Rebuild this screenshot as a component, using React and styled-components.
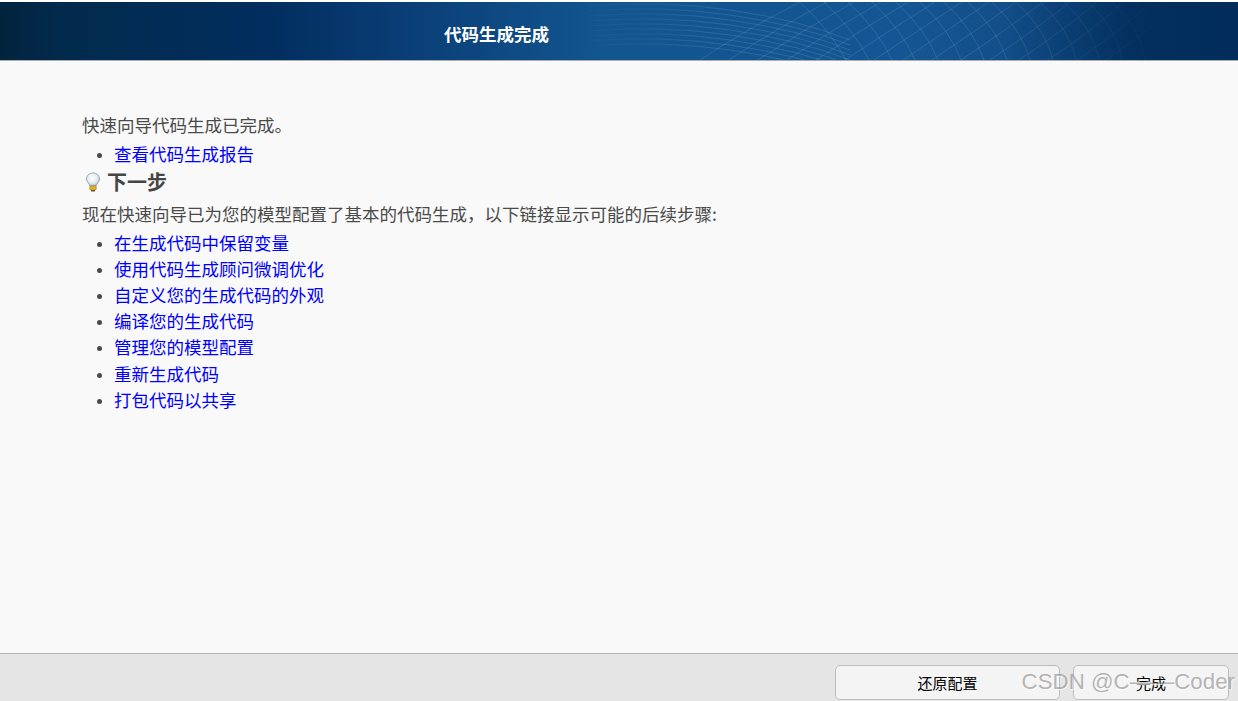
import React from 'react';
import styled, { createGlobalStyle } from 'styled-components';

const links = [
    '在生成代码中保留变量',
    '使用代码生成顾问微调优化',
    '自定义您的生成代码的外观',
    '编译您的生成代码',
    '管理您的模型配置',
    '重新生成代码',
    '打包代码以共享',
];

// mesh lines of the banner picture
const meshA = Array.from({ length: 17 }, (_, i) => {
    const x = 700 + i * 29;
    return `M${x} 60 Q${x + 45} 30 ${x + 100 - i * 2} 2`;
});
const meshB = Array.from({ length: 16 }, (_, i) => {
    const x = 800 + i * 24;
    return `M${x} 2 Q${x + 30} 30 ${x + 46 - i} 60`;
});
const meshC = Array.from({ length: 9 }, (_, i) => {
    const y = 6 + i * 5;
    return `M590 ${y} Q660 ${y - 6} 730 ${y + 4} T850 ${y + 34}`;
});

const App = () => {
    return (
        <Page>
            <GlobalStyle />
            <Banner>
                <BannerMesh viewBox="0 0 1238 58" preserveAspectRatio="none">
                    <defs>
                        <linearGradient id="meshFade" gradientUnits="userSpaceOnUse" x1="560" y1="0" x2="1170" y2="0">
                            <stop offset="0" stopColor="#9fc0e0" stopOpacity="0" />
                            <stop offset="0.25" stopColor="#9fc0e0" stopOpacity="0.22" />
                            <stop offset="0.7" stopColor="#9fc0e0" stopOpacity="0.22" />
                            <stop offset="1" stopColor="#9fc0e0" stopOpacity="0" />
                        </linearGradient>
                    </defs>
                    <g transform="translate(0 -2)" fill="none" stroke="url(#meshFade)" strokeWidth="0.8">
                        {meshA.map((d) => (
                            <path key={d} d={d} />
                        ))}
                        {meshB.map((d) => (
                            <path key={d} d={d} />
                        ))}
                        {meshC.map((d) => (
                            <path key={d} d={d} />
                        ))}
                    </g>
                </BannerMesh>
                <BannerTitle>代码生成完成</BannerTitle>
            </Banner>
            <Content>
                <Text>快速向导代码生成已完成。</Text>
                <LinkList top={3}>
                    <li>
                        <a href="#report">查看代码生成报告</a>
                    </li>
                </LinkList>
                <StepHeading>
                    <svg width="18" height="20" viewBox="0 0 18 20">
                        <defs>
                            <radialGradient id="bulbGlass" cx="0.45" cy="0.4" r="0.6">
                                <stop offset="0" stopColor="#ffffff" />
                                <stop offset="0.7" stopColor="#dfe9ee" />
                                <stop offset="1" stopColor="#9fb2bb" />
                            </radialGradient>
                        </defs>
                        <path
                            d="M9 1C5 1 2.500 3.800 2.500 7C2.500 9.800 5.500 11.300 5.800 14H12.200C12.500 11.300 15.500 9.800 15.500 7C15.500 3.800 13 1 9 1Z"
                            fill="url(#bulbGlass)"
                            stroke="#9aa9b0"
                        />
                        <rect x="5.800" y="14" width="6.400" height="4" rx="1" fill="#e0b52c" stroke="#a3832a" strokeWidth="0.7" />
                        <rect x="7" y="18" width="4" height="1.500" fill="#6d5a2a" />
                    </svg>
                    下一步
                </StepHeading>
                <Text>现在快速向导已为您的模型配置了基本的代码生成，以下链接显示可能的后续步骤:</Text>
                <LinkList top={2}>
                    {links.map((label) => (
                        <li key={label}>
                            <a href="#step">{label}</a>
                        </li>
                    ))}
                </LinkList>
            </Content>
            <Footer>
                <FooterButton width={225} spaced>还原配置</FooterButton>
                <FooterButton width={156}>完成</FooterButton>
                <Watermark>CSDN @C——Coder</Watermark>
            </Footer>
        </Page>
    );
};

const GlobalStyle = createGlobalStyle`
    html, body {
        margin: 0;
        padding: 0;
        height: 100%;
        overflow: hidden;
        background: #f9f9f9;
    }
    #root {
        height: 100%;
    }
`;
const Page = styled.div`
    height: 100%;
    display: flex;
    flex-direction: column;
    box-sizing: border-box;
    padding-top: 2px;
    background: #fff;
    font-family: 'Noto Sans CJK SC', 'Liberation Sans', sans-serif;
`;
const Banner = styled.div`
    position: relative;
    flex: none;
    height: 58px;
    display: flex;
    align-items: center;
    padding-left: 444px;
    border-bottom: 1px solid #a9adb0;
    background: linear-gradient(
        90deg,
        #02233d 0,
        #022a4c 60px,
        #012e5f 270px,
        #0a3d75 400px,
        #12558f 600px,
        #145693 900px,
        #134f8a 1000px,
        #03305f 1130px,
        #012c5c 1238px
    );
`;
const BannerMesh = styled.svg`
    position: absolute;
    inset: 0;
    width: 100%;
    height: 100%;
`;
const BannerTitle = styled.h1`
    position: relative;
    margin: 6px 0 0;
    font-size: 17.5px;
    line-height: 24px;
    font-weight: 700;
    color: #fff;
`;
const Content = styled.div`
    flex: 1;
    padding: 51px 82px 0;
    background: #f9f9f9;
    color: #4a4a4a;
    font-size: 17.5px;
    line-height: 26.2px;
`;
const Text = styled.div`
    letter-spacing: 0;
`;
const LinkList = styled.ul`
    margin: ${({ top }) => top}px 0 0;
    padding-left: 32px;
    li {
        height: 26.2px;
    }
    li::marker {
        color: #4a4a4a;
        font-size: 13px;
    }
    a {
        color: #0000ff;
        text-decoration: none;
    }
`;
const StepHeading = styled.div`
    display: flex;
    align-items: center;
    gap: 5px;
    height: 30px;
    margin: 0 0 4px 2px;
    font-size: 20px;
    font-weight: 700;
    color: #454545;
`;
const Footer = styled.div`
    position: relative;
    flex: none;
    height: 48px;
    display: flex;
    justify-content: flex-end;
    align-items: flex-start;
    box-sizing: border-box;
    padding: 11px 9px 0 0;
    border-top: 1px solid #b5b5b5;
    background: #e5e5e5;
    overflow: hidden;
`;
const FooterButton = styled.button`
    flex: none;
    width: ${({ width }) => width}px;
    height: 35px;
    margin-right: ${({ spaced }) => (spaced ? 13 : 0)}px;
    border: 1px solid #bcbcbc;
    border-radius: 5px;
    background: #f4f4f4;
    color: #000;
    font-family: inherit;
    font-size: 15px;
`;
const Watermark = styled.div`
    position: absolute;
    right: 3px;
    top: 11px;
    font-family: 'Liberation Sans', sans-serif;
    font-size: 22.3px;
    line-height: 34px;
    white-space: nowrap;
    color: rgba(120, 120, 120, 0.55);
    text-shadow: 1px 1px 1px rgba(255, 255, 255, 0.7);
    pointer-events: none;
`;

export default App;
